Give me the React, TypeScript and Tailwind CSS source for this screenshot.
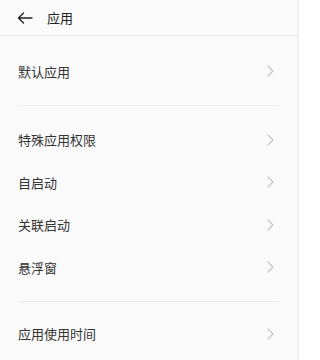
import React from "react";

const Chevron = () => (
  <svg width="7" height="12" viewBox="0 0 7 12" fill="none" className="shrink-0">
    <path d="M1 1l5 5-5 5" stroke="#c4c4c4" strokeWidth="1.2" strokeLinecap="round" strokeLinejoin="round" />
  </svg>
);

function Row({ label }: { label: string }) {
  return (
    <div className="flex h-[42.5px] items-center justify-between pl-[18px] pr-[23px]">
      <span className="text-[13px] text-[#333333]">{label}</span>
      <Chevron />
    </div>
  );
}

const Divider = () => <div className="mx-[18px] h-px bg-[#ececec]" />;

export default function App() {
  return (
    <div
      className="h-[360px] w-[299px] overflow-hidden bg-[#fafafa] border-r-2 border-[#f0f0f0]"
      style={{ fontFamily: '"Noto Sans CJK SC", "Noto Sans", sans-serif' }}
    >
      <div className="flex h-[36px] items-center gap-[14px] border-b border-[#e8e8e8] pl-[17px]">
        <svg width="16" height="12" viewBox="0 0 16 12" fill="none">
          <path d="M15 6H1.5M6.5 1L1.5 6l5 5" stroke="#222" strokeWidth="1.4" strokeLinecap="round" strokeLinejoin="round" />
        </svg>
        <span className="text-[13px] text-[#222]">应用</span>
      </div>

      <div className="pt-[14px] pb-[12px]">
        <Row label="默认应用" />
      </div>
      <Divider />

      <div className="pt-[13px] pb-[12px]">
        <Row label="特殊应用权限" />
        <Row label="自启动" />
        <Row label="关联启动" />
        <Row label="悬浮窗" />
      </div>
      <Divider />

      <div className="pt-[11px]">
        <Row label="应用使用时间" />
      </div>
    </div>
  );
}
